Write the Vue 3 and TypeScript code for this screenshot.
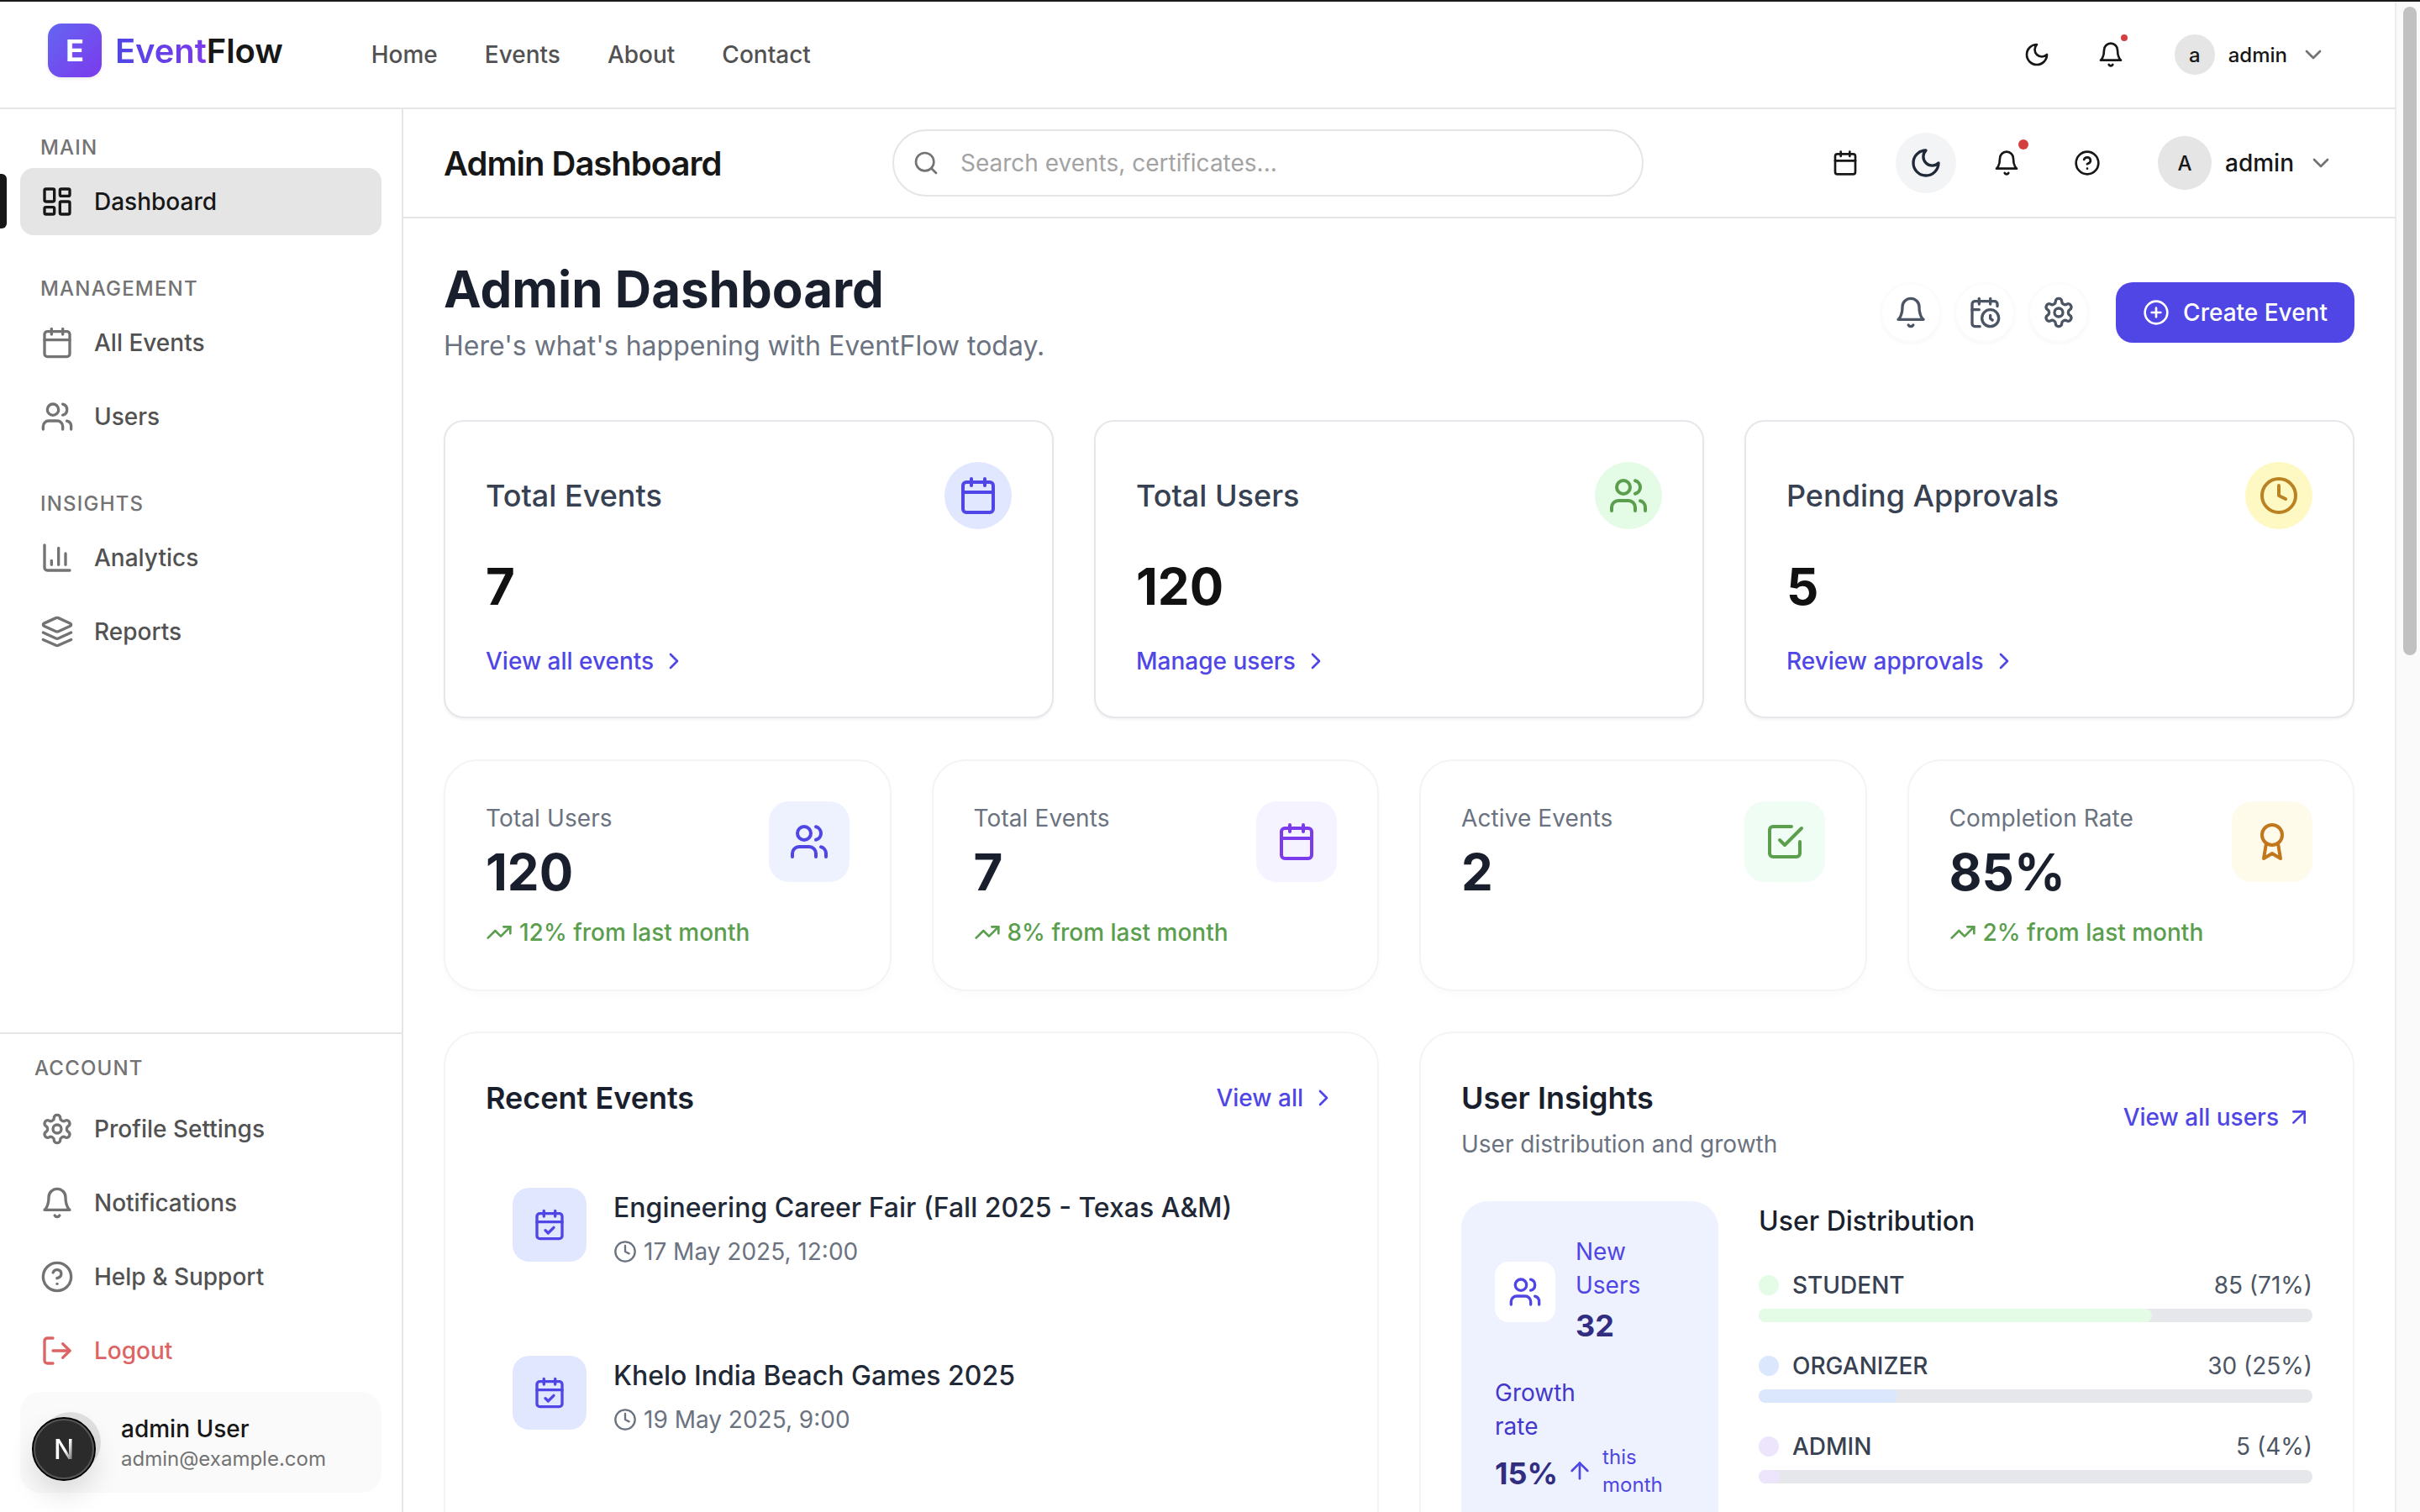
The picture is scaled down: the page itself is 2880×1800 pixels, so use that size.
<script setup lang="ts">
import { h } from 'vue';

const paths: Record<string, string> = {
  calendar: '<path d="M8 2v4"/><path d="M16 2v4"/><rect x="3" y="4" width="18" height="18" rx="2"/><path d="M3 10h18"/>',
  calendarCheck: '<path d="M8 2v4"/><path d="M16 2v4"/><rect x="3" y="4" width="18" height="18" rx="2"/><path d="M3 10h18"/><path d="m9 16 2 2 4-4"/>',
  calendarClock: '<path d="M21 7.5V6a2 2 0 0 0-2-2H5a2 2 0 0 0-2 2v14a2 2 0 0 0 2 2h3.5"/><path d="M16 2v4"/><path d="M8 2v4"/><path d="M3 10h5"/><path d="M17.5 17.5 16 16.3V14"/><circle cx="16" cy="16" r="6"/>',
  dashboard: '<rect x="3" y="3" width="7" height="9" rx="1"/><rect x="14" y="3" width="7" height="5" rx="1"/><rect x="14" y="12" width="7" height="9" rx="1"/><rect x="3" y="16" width="7" height="5" rx="1"/>',
  users: '<path d="M16 21v-2a4 4 0 0 0-4-4H6a4 4 0 0 0-4 4v2"/><circle cx="9" cy="7" r="4"/><path d="M22 21v-2a4 4 0 0 0-3-3.87"/><path d="M16 3.13a4 4 0 0 1 0 7.75"/>',
  chart: '<path d="M3 3v16a2 2 0 0 0 2 2h16"/><path d="M18 17V9"/><path d="M13 17V5"/><path d="M8 17v-3"/>',
  layers: '<path d="m12.83 2.18a2 2 0 0 0-1.66 0L2.6 6.08a1 1 0 0 0 0 1.83l8.58 3.91a2 2 0 0 0 1.66 0l8.58-3.9a1 1 0 0 0 0-1.83Z"/><path d="m22 17.65-9.17 4.16a2 2 0 0 1-1.66 0L2 17.65"/><path d="m22 12.65-9.17 4.16a2 2 0 0 1-1.66 0L2 12.65"/>',
  settings: '<path d="M12.22 2h-.44a2 2 0 0 0-2 2v.18a2 2 0 0 1-1 1.73l-.43.25a2 2 0 0 1-2 0l-.15-.08a2 2 0 0 0-2.73.73l-.22.38a2 2 0 0 0 .73 2.73l.15.1a2 2 0 0 1 1 1.72v.51a2 2 0 0 1-1 1.74l-.15.09a2 2 0 0 0-.73 2.73l.22.38a2 2 0 0 0 2.73.73l.15-.08a2 2 0 0 1 2 0l.43.25a2 2 0 0 1 1 1.73V20a2 2 0 0 0 2 2h.44a2 2 0 0 0 2-2v-.18a2 2 0 0 1 1-1.73l.43-.25a2 2 0 0 1 2 0l.15.08a2 2 0 0 0 2.73-.73l.22-.39a2 2 0 0 0-.73-2.73l-.15-.08a2 2 0 0 1-1-1.74v-.5a2 2 0 0 1 1-1.74l.15-.09a2 2 0 0 0 .73-2.73l-.22-.38a2 2 0 0 0-2.73-.73l-.15.08a2 2 0 0 1-2 0l-.43-.25a2 2 0 0 1-1-1.73V4a2 2 0 0 0-2-2z"/><circle cx="12" cy="12" r="3"/>',
  bell: '<path d="M6 8a6 6 0 0 1 12 0c0 7 3 9 3 9H3s3-2 3-9"/><path d="M10.3 21a1.94 1.94 0 0 0 3.4 0"/>',
  help: '<circle cx="12" cy="12" r="10"/><path d="M9.09 9a3 3 0 0 1 5.83 1c0 2-3 3-3 3"/><path d="M12 17h.01"/>',
  logout: '<path d="M9 21H5a2 2 0 0 1-2-2V5a2 2 0 0 1 2-2h4"/><path d="m16 17 5-5-5-5"/><path d="M21 12H9"/>',
  moon: '<path d="M12 3a6 6 0 0 0 9 9 9 9 0 1 1-9-9Z"/>',
  search: '<circle cx="11" cy="11" r="8"/><path d="m21 21-4.3-4.3"/>',
  chevronDown: '<path d="m6 9 6 6 6-6"/>',
  chevronRight: '<path d="m9 18 6-6-6-6"/>',
  plusCircle: '<circle cx="12" cy="12" r="10"/><path d="M8 12h8"/><path d="M12 8v8"/>',
  clock: '<circle cx="12" cy="12" r="10"/><polyline points="12 6 12 12 16 14"/>',
  trending: '<polyline points="22 7 13.5 15.5 8.5 10.5 2 17"/><polyline points="16 7 22 7 22 13"/>',
  checkSquare: '<path d="m9 11 3 3L22 4"/><path d="M21 12v7a2 2 0 0 1-2 2H5a2 2 0 0 1-2-2V5a2 2 0 0 1 2-2h11"/>',
  award: '<circle cx="12" cy="8" r="6"/><path d="M15.477 12.89 17 22l-5-3-5 3 1.523-9.11"/>',
  arrowUp: '<path d="m5 12 7-7 7 7"/><path d="M12 19V5"/>',
  arrowUpRight: '<path d="M7 7h10v10"/><path d="M7 17 17 7"/>',
};

const Icon = (props: { name: string; size?: number }) =>
  h('svg', {
    width: props.size ?? 40,
    height: props.size ?? 40,
    viewBox: '0 0 24 24',
    fill: 'none',
    stroke: 'currentColor',
    'stroke-width': 2,
    'stroke-linecap': 'round',
    'stroke-linejoin': 'round',
    innerHTML: paths[props.name],
  });
Icon.props = ['name', 'size'];

const menuGroups = [
  { label: 'MAIN', items: [{ icon: 'dashboard', text: 'Dashboard', active: true }] },
  {
    label: 'MANAGEMENT',
    items: [
      { icon: 'calendar', text: 'All Events' },
      { icon: 'users', text: 'Users' },
    ],
  },
  {
    label: 'INSIGHTS',
    items: [
      { icon: 'chart', text: 'Analytics' },
      { icon: 'layers', text: 'Reports' },
    ],
  },
];

const accountItems = [
  { icon: 'settings', text: 'Profile Settings' },
  { icon: 'bell', text: 'Notifications' },
  { icon: 'help', text: 'Help & Support' },
  { icon: 'logout', text: 'Logout', danger: true },
];

const summaryCards = [
  { title: 'Total Events', value: '7', link: 'View all events', icon: 'calendar', tone: 'indigo' },
  { title: 'Total Users', value: '120', link: 'Manage users', icon: 'users', tone: 'green' },
  { title: 'Pending Approvals', value: '5', link: 'Review approvals', icon: 'clock', tone: 'yellow' },
];

const statCards = [
  { label: 'Total Users', value: '120', trend: '12% from last month', icon: 'users', tone: 'indigo' },
  { label: 'Total Events', value: '7', trend: '8% from last month', icon: 'calendar', tone: 'purple' },
  { label: 'Active Events', value: '2', trend: '', icon: 'checkSquare', tone: 'green' },
  { label: 'Completion Rate', value: '85%', trend: '2% from last month', icon: 'award', tone: 'amber' },
];

const recentEvents = [
  { title: 'Engineering Career Fair (Fall 2025 - Texas A&M)', date: '17 May 2025, 12:00' },
  { title: 'Khelo India Beach Games 2025', date: '19 May 2025, 9:00' },
];

const distribution = [
  { role: 'STUDENT', count: '85 (71%)', pct: 71, color: '#e4fbe6' },
  { role: 'ORGANIZER', count: '30 (25%)', pct: 25, color: '#dbe7fd' },
  { role: 'ADMIN', count: '5 (4%)', pct: 4, color: '#ede5fb' },
];
</script>

<template>
  <div class="page">
    <div class="shell">
      <header class="topnav">
        <div class="brand">
          <span class="brand-mark">E</span>
          <span class="brand-name"><span class="brand-event">Event</span>Flow</span>
        </div>
        <nav class="topnav-links">
          <a>Home</a>
          <a>Events</a>
          <a>About</a>
          <a>Contact</a>
        </nav>
        <div class="topnav-right">
          <span class="top-slot"><Icon name="moon" :size="32" /></span>
          <span class="top-slot">
            <Icon name="bell" :size="32" />
            <i class="dot dot-small"></i>
          </span>
          <span class="top-avatar">a</span>
          <span class="top-user">admin</span>
          <Icon class="chevron" name="chevronDown" :size="32" />
        </div>
      </header>

      <div class="body">
        <aside class="sidebar">
          <div class="menu">
            <div v-for="group in menuGroups" :key="group.label" class="menu-group">
              <div class="menu-label">{{ group.label }}</div>
              <a
                v-for="item in group.items"
                :key="item.text"
                class="menu-item"
                :class="{ active: item.active }"
              >
                <Icon :name="item.icon" />
                <span>{{ item.text }}</span>
              </a>
            </div>
          </div>

          <div class="account">
            <div class="menu-label account-label">ACCOUNT</div>
            <div class="account-items">
              <a
                v-for="item in accountItems"
                :key="item.text"
                class="menu-item"
                :class="{ danger: item.danger }"
              >
                <Icon :name="item.icon" />
                <span>{{ item.text }}</span>
              </a>
            </div>
            <div class="user-card">
              <span class="user-avatar"></span>
              <div>
                <div class="user-name">admin User</div>
                <div class="user-mail">admin@example.com</div>
              </div>
              <span class="dev-badge"><span class="dev-n">N</span></span>
            </div>
          </div>
        </aside>

        <div class="content">
          <div class="subheader">
            <h2 class="subheader-title">Admin Dashboard</h2>
            <div class="search">
              <Icon name="search" :size="32" />
              <span>Search events, certificates...</span>
            </div>
            <div class="subheader-actions">
              <span class="action-slot"><Icon name="calendar" :size="32" /></span>
              <span class="action-slot action-moon"><Icon name="moon" /></span>
              <span class="action-slot">
                <Icon name="bell" :size="32" />
                <i class="dot dot-large"></i>
              </span>
              <span class="action-slot"><Icon name="help" :size="32" /></span>
              <span class="sub-avatar">A</span>
              <span class="sub-user">admin</span>
              <Icon class="chevron" name="chevronDown" :size="32" />
            </div>
          </div>

          <main class="main">
            <div class="page-head">
              <div>
                <h1>Admin Dashboard</h1>
                <p>Here's what's happening with EventFlow today.</p>
              </div>
              <div class="page-actions">
                <span class="round-btn"><Icon name="bell" /></span>
                <span class="round-btn"><Icon name="calendarClock" /></span>
                <span class="round-btn"><Icon name="settings" /></span>
                <button class="create-btn">
                  <Icon name="plusCircle" :size="32" />
                  <span>Create Event</span>
                </button>
              </div>
            </div>

            <section class="summary-grid">
              <article v-for="card in summaryCards" :key="card.title" class="summary-card">
                <div class="summary-top">
                  <span class="summary-title">{{ card.title }}</span>
                  <span class="summary-icon" :class="card.tone"><Icon :name="card.icon" :size="48" /></span>
                </div>
                <div class="summary-value">{{ card.value }}</div>
                <a class="link summary-link">
                  <span>{{ card.link }}</span>
                  <Icon name="chevronRight" :size="32" />
                </a>
              </article>
            </section>

            <section class="stat-grid">
              <article v-for="card in statCards" :key="card.label" class="stat-card">
                <div>
                  <div class="stat-label">{{ card.label }}</div>
                  <div class="stat-value">{{ card.value }}</div>
                  <div v-if="card.trend" class="stat-trend">
                    <Icon name="trending" :size="32" />
                    <span>{{ card.trend }}</span>
                  </div>
                </div>
                <span class="stat-icon" :class="card.tone"><Icon :name="card.icon" :size="48" /></span>
              </article>
            </section>

            <section class="panel-grid">
              <article class="panel">
                <div class="panel-head">
                  <h3>Recent Events</h3>
                  <a class="link">
                    <span>View all</span>
                    <Icon name="chevronRight" :size="32" />
                  </a>
                </div>
                <div class="event-list">
                  <div v-for="event in recentEvents" :key="event.title" class="event-row">
                    <span class="event-icon"><Icon name="calendarCheck" /></span>
                    <div>
                      <div class="event-title">{{ event.title }}</div>
                      <div class="event-date">
                        <Icon name="clock" :size="28" />
                        <span>{{ event.date }}</span>
                      </div>
                    </div>
                  </div>
                </div>
              </article>

              <article class="panel">
                <div class="panel-head insights-head">
                  <div>
                    <h3>User Insights</h3>
                    <p>User distribution and growth</p>
                  </div>
                  <a class="link">
                    <span>View all users</span>
                    <Icon name="arrowUpRight" :size="32" />
                  </a>
                </div>
                <div class="insights-body">
                  <div class="growth">
                    <div class="growth-top">
                      <span class="growth-icon"><Icon name="users" /></span>
                      <div>
                        <div class="narrow">New Users</div>
                        <div class="growth-count">32</div>
                      </div>
                    </div>
                    <div class="narrow growth-rate">Growth rate</div>
                    <div class="growth-bottom">
                      <span class="growth-pct">15%</span>
                      <Icon name="arrowUp" :size="32" />
                      <span class="narrow growth-note">this month</span>
                    </div>
                  </div>
                  <div class="dist">
                    <h4>User Distribution</h4>
                    <div v-for="row in distribution" :key="row.role" class="dist-row">
                      <div class="dist-line">
                        <i class="dist-dot" :style="{ background: row.color }"></i>
                        <span class="dist-role">{{ row.role }}</span>
                        <span class="dist-count">{{ row.count }}</span>
                      </div>
                      <div class="dist-track">
                        <div class="dist-fill" :style="{ width: row.pct + '%', background: row.color }"></div>
                      </div>
                    </div>
                  </div>
                </div>
              </article>
            </section>
          </main>
        </div>
      </div>
    </div>

    <div class="scrollbar"><div class="scrollbar-thumb"></div></div>
  </div>
</template>

<style>
html,
body {
  margin: 0;
  overflow: hidden;
  background: #fff;
}
</style>

<style scoped>
* {
  box-sizing: border-box;
}

.page {
  display: flex;
  width: 2880px;
  height: 1800px;
  overflow: hidden;
  border-top: 2px solid #1a1a1a;
  font-family: Inter, 'Liberation Sans', sans-serif;
  font-size: 28px;
  color: #171717;
  background: #fff;
}

.shell {
  flex: 1;
  min-width: 0;
  display: flex;
  flex-direction: column;
}

.scrollbar {
  flex: none;
  width: 30px;
  padding: 6px 6px 0 8px;
  background: #fafafa;
  border-left: 2px solid #ececec;
}

.scrollbar-thumb {
  width: 16px;
  height: 772px;
  border-radius: 8px;
  background: #c1c1c1;
}

.topnav {
  flex: none;
  height: 128px;
  display: flex;
  align-items: center;
  padding: 0 81px 0 57px;
  border-bottom: 2px solid #e5e5e5;
}

.brand {
  display: flex;
  align-items: center;
  gap: 16px;
  margin-bottom: 10px;
}

.brand-mark {
  width: 64px;
  height: 64px;
  display: flex;
  align-items: center;
  justify-content: center;
  border-radius: 16px;
  background: linear-gradient(135deg, #6366f1, #7c3aed);
  box-shadow: 0 2px 4px rgba(0, 0, 0, 0.08);
  color: #fff;
  font-size: 36px;
  font-weight: 700;
}

.brand-name {
  font-size: 40px;
  font-weight: 600;
  letter-spacing: -0.1px;
  color: #171717;
}

.brand-event {
  background: linear-gradient(90deg, #4f46e5, #7c3aed);
  -webkit-background-clip: text;
  background-clip: text;
  color: transparent;
}

.topnav-links {
  display: flex;
  gap: 56px;
  margin-left: 105px;
  color: #525252;
  font-weight: 500;
}

.topnav-right {
  display: flex;
  align-items: center;
  margin-left: auto;
}

.top-slot {
  position: relative;
  width: 64px;
  height: 64px;
  display: flex;
  align-items: center;
  justify-content: center;
  margin-right: 24px;
}

.dot {
  position: absolute;
  border-radius: 50%;
  background: #d44040;
}

.dot-small {
  top: 8px;
  right: 12px;
  width: 8px;
  height: 8px;
}

.dot-large {
  top: 8px;
  right: 10px;
  width: 12px;
  height: 12px;
}

.top-avatar {
  width: 48px;
  height: 48px;
  margin-left: 20px;
  display: flex;
  align-items: center;
  justify-content: center;
  border-radius: 50%;
  background: #e5e5e5;
  font-size: 24px;
  font-weight: 500;
}

.top-user {
  margin: 0 15px 0 16px;
  font-size: 24px;
  font-weight: 500;
}

.chevron {
  color: #737373;
}

.body {
  flex: 1;
  min-height: 0;
  display: flex;
}

.sidebar {
  flex: none;
  width: 480px;
  display: flex;
  flex-direction: column;
  justify-content: space-between;
  border-right: 2px solid #e5e5e5;
}

.menu {
  padding: 30px 24px 0;
  display: flex;
  flex-direction: column;
  gap: 48px;
}

.menu-group {
  display: flex;
  flex-direction: column;
  gap: 8px;
}

.menu-label {
  padding-left: 24px;
  line-height: 32px;
  font-size: 24px;
  font-weight: 500;
  letter-spacing: 1.2px;
  color: #737373;
}

.menu-item {
  position: relative;
  height: 80px;
  display: flex;
  align-items: center;
  gap: 24px;
  padding: 0 24px;
  border-radius: 16px;
  font-weight: 500;
  color: #525252;
}

.menu-item svg {
  color: #737373;
}

.menu-item.active {
  background: #e5e5e5;
  color: #171717;
}

.menu-item.active svg {
  color: #171717;
}

.menu-item.active::before {
  content: '';
  position: absolute;
  left: -24px;
  top: 7px;
  width: 8px;
  height: 65px;
  border-radius: 0 6px 6px 0;
  background: #171717;
}

.menu-item.danger,
.menu-item.danger svg {
  color: #dc6464;
}

.account {
  padding: 25px 24px 23px;
  border-top: 2px solid #e5e5e5;
}

.account-label {
  padding-left: 17px;
  margin-bottom: 16px;
}

.account-items {
  display: flex;
  flex-direction: column;
  gap: 8px;
  margin-bottom: 9px;
}

.user-card {
  position: relative;
  height: 120px;
  display: flex;
  align-items: center;
  gap: 24px;
  padding: 0 24px;
  border-radius: 24px;
  background: #fafafa;
}

.user-avatar {
  flex: none;
  width: 72px;
  height: 72px;
  border-radius: 50%;
  background: #e0e0e0;
}

.user-name {
  line-height: 40px;
  font-weight: 500;
  color: #171717;
}

.user-mail {
  line-height: 32px;
  font-size: 24px;
  color: #737373;
}

.dev-badge {
  position: absolute;
  left: 14px;
  top: 30px;
  width: 76px;
  height: 76px;
  display: flex;
  align-items: center;
  justify-content: center;
  border-radius: 50%;
  border: 2px solid #000;
  outline: 2px solid #555;
  outline-offset: -4px;
  background: #2b2b2b;
  box-shadow: 0 16px 32px rgba(0, 0, 0, 0.12);
}

.dev-n {
  background: linear-gradient(115deg, #fff 55%, #777 85%);
  -webkit-background-clip: text;
  background-clip: text;
  color: transparent;
  font-size: 32px;
  font-weight: 500;
}

.content {
  flex: 1;
  min-width: 0;
  display: flex;
  flex-direction: column;
}

.subheader {
  flex: none;
  height: 130px;
  display: flex;
  align-items: center;
  padding: 0 72px 0 48px;
  border-bottom: 2px solid #e5e5e5;
}

.subheader-title {
  flex: none;
  width: 534px;
  margin: 0;
  font-size: 40px;
  font-weight: 600;
  letter-spacing: -1px;
  color: #171717;
}

.search {
  flex: none;
  width: 894px;
  height: 80px;
  display: flex;
  align-items: center;
  gap: 25px;
  padding: 0 22px;
  border: 2px solid #e5e5e5;
  border-radius: 40px;
  color: #a3a3a3;
}

.search svg {
  color: #737373;
}

.subheader-actions {
  display: flex;
  align-items: center;
  gap: 24px;
  margin-left: auto;
}

.action-slot {
  position: relative;
  width: 72px;
  height: 72px;
  display: flex;
  align-items: center;
  justify-content: center;
  border-radius: 50%;
}

.action-moon {
  background: #f3f4f6;
  color: #1f2937;
}

.sub-avatar {
  width: 64px;
  height: 64px;
  margin-left: 24px;
  display: flex;
  align-items: center;
  justify-content: center;
  border-radius: 50%;
  background: #e5e5e5;
  font-size: 24px;
  font-weight: 500;
}

.sub-user {
  margin: 0 -8px;
  font-weight: 500;
}

.main {
  flex: 1;
  min-height: 0;
  padding: 48px 48px 0;
}

.page-head {
  display: flex;
  align-items: center;
  justify-content: space-between;
}

.page-head h1 {
  margin: 0;
  font-size: 60px;
  line-height: 72px;
  font-weight: 700;
  color: #1a1f2e;
}

.page-head p {
  margin: 8px 0 0;
  font-size: 32px;
  line-height: 48px;
  color: #6b7280;
}

.page-actions {
  display: flex;
  align-items: center;
  gap: 16px;
}

.round-btn {
  width: 72px;
  height: 72px;
  display: flex;
  align-items: center;
  justify-content: center;
  border-radius: 50%;
  background: #fff;
  border: 2px solid #fbfbfb;
  box-shadow: 0 2px 4px rgba(0, 0, 0, 0.03);
  color: #4b5563;
}

.create-btn {
  height: 72px;
  margin-left: 16px;
  display: flex;
  align-items: center;
  gap: 16px;
  padding: 0 32px;
  border: 0;
  border-radius: 20px;
  background: #4f46e5;
  color: #fff;
  font: 500 28px Inter, 'Liberation Sans', sans-serif;
}

.summary-grid {
  display: grid;
  grid-template-columns: repeat(3, 1fr);
  gap: 48px;
  margin-top: 64px;
}

.summary-card {
  height: 355px;
  padding: 48px;
  border: 2px solid #e5e7eb;
  border-radius: 24px;
  background: #fff;
  box-shadow: 0 2px 3px rgba(0, 0, 0, 0.05);
}

.summary-top {
  display: flex;
  align-items: center;
  justify-content: space-between;
}

.summary-title {
  font-size: 36px;
  font-weight: 500;
  color: #374151;
}

.summary-icon {
  width: 80px;
  height: 80px;
  display: flex;
  align-items: center;
  justify-content: center;
  border-radius: 50%;
}

.summary-icon.indigo {
  background: #e0e7ff;
  color: #4f46e5;
}

.summary-icon.green {
  background: #e4fbe6;
  color: #5a9e4e;
}

.summary-icon.yellow {
  background: #fef9c3;
  color: #b98324;
}

.summary-value {
  margin-top: 32px;
  font-size: 60px;
  line-height: 72px;
  font-weight: 700;
  color: #111;
}

.link {
  display: inline-flex;
  align-items: center;
  gap: 8px;
  font-weight: 500;
  line-height: 40px;
  color: #4f46e5;
}

.summary-link {
  margin-top: 33px;
}

.stat-grid {
  display: grid;
  grid-template-columns: repeat(4, 1fr);
  gap: 48px;
  margin-top: 49px;
}

.stat-card {
  height: 276px;
  display: flex;
  align-items: flex-start;
  justify-content: space-between;
  padding: 48px;
  border: 2px solid #f3f4f6;
  border-radius: 40px;
  background: #fff;
  box-shadow: 0 4px 8px rgba(0, 0, 0, 0.02);
}

.stat-label {
  line-height: 40px;
  letter-spacing: 0.1px;
  color: #6b7280;
}

.stat-value {
  margin-top: 8px;
  font-size: 60px;
  line-height: 72px;
  font-weight: 700;
  color: #1a1f2e;
}

.stat-trend {
  display: flex;
  align-items: center;
  gap: 8px;
  margin-top: 16px;
  line-height: 40px;
  font-weight: 500;
  color: #5a9e4e;
}

.stat-icon {
  flex: none;
  width: 96px;
  height: 96px;
  display: flex;
  align-items: center;
  justify-content: center;
  border-radius: 24px;
}

.stat-icon.indigo {
  background: #eef2ff;
  color: #4f46e5;
}

.stat-icon.purple {
  background: #f5f3ff;
  color: #7c3aed;
}

.stat-icon.green {
  background: #f0fdf4;
  color: #5a9e4e;
}

.stat-icon.amber {
  background: #fffbeb;
  color: #c2771c;
}

.panel-grid {
  display: grid;
  grid-template-columns: repeat(2, 1fr);
  gap: 48px;
  margin-top: 48px;
}

.panel {
  height: 700px;
  padding: 48px;
  border: 2px solid #f3f4f6;
  border-radius: 40px;
  background: #fff;
}

.panel-head {
  display: flex;
  align-items: center;
  justify-content: space-between;
}

.panel-head h3 {
  margin: 0;
  font-size: 36px;
  line-height: 58px;
  font-weight: 600;
  color: #1a1f2e;
}

.panel-head p {
  margin: 6px 0 0;
  line-height: 40px;
  color: #6b7280;
}

.event-list {
  display: flex;
  flex-direction: column;
  gap: 40px;
  margin-top: 46px;
}

.event-row {
  display: flex;
  align-items: flex-start;
  gap: 32px;
  padding: 32px;
}

.event-icon {
  flex: none;
  width: 88px;
  height: 88px;
  display: flex;
  align-items: center;
  justify-content: center;
  border-radius: 20px;
  background: #e0e7ff;
  color: #4f46e5;
}

.event-title {
  font-size: 32px;
  line-height: 48px;
  font-weight: 500;
  color: #1f2937;
}

.event-date {
  display: flex;
  align-items: center;
  gap: 8px;
  margin-top: 8px;
  line-height: 40px;
  color: #6b7280;
}

.insights-body {
  display: grid;
  grid-template-columns: 306px 1fr;
  gap: 48px;
  margin-top: 48px;
}

.growth {
  height: 500px;
  padding: 40px;
  border-radius: 32px;
  background: #eef2ff;
  color: #4f46e5;
  line-height: 40px;
}

.growth-top {
  display: flex;
  align-items: center;
  gap: 24px;
}

.growth-icon {
  flex: none;
  width: 72px;
  height: 72px;
  display: flex;
  align-items: center;
  justify-content: center;
  border-radius: 16px;
  background: #fff;
}

.narrow {
  width: min-content;
}

.growth-count {
  font-size: 36px;
  line-height: 56px;
  font-weight: 700;
  color: #312e81;
}

.growth-rate {
  margin-top: 32px;
  color: #4338ca;
}

.growth-bottom {
  display: flex;
  align-items: center;
}

.growth-pct {
  padding-top: 6px;
  margin-right: 10px;
  font-size: 36px;
  font-weight: 700;
  color: #312e81;
}

.growth-note {
  margin-left: 11px;
  font-size: 24px;
  line-height: 33px;
}

.dist h4 {
  margin: 0 0 32px;
  font-size: 32px;
  line-height: 48px;
  font-weight: 500;
  color: #1a1f2e;
}

.dist-row {
  margin-bottom: 32px;
}

.dist-line {
  display: flex;
  align-items: center;
  line-height: 40px;
}

.dist-dot {
  width: 24px;
  height: 24px;
  margin-right: 16px;
  border-radius: 50%;
}

.dist-role {
  font-weight: 500;
  color: #374151;
}

.dist-count {
  margin-left: auto;
  color: #4b5563;
}

.dist-track {
  height: 16px;
  margin-top: 8px;
  border-radius: 8px;
  overflow: hidden;
  background: #e5e7eb;
}

.dist-fill {
  height: 100%;
  border-radius: 8px;
}
</style>
